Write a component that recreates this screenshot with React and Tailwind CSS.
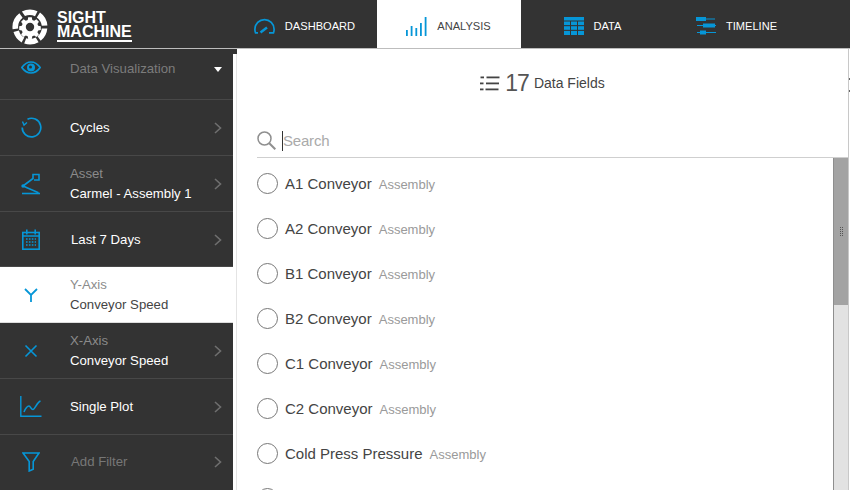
import React from 'react';

const BLUE = '#0696d7';

const Chevron = () => (
	<svg width="8" height="12" viewBox="0 0 8 12" fill="none" stroke="#6f6f6f" strokeWidth="1.6" className="shrink-0">
		<path d="M1 1l5.5 5L1 11" />
	</svg>
);

const LogoMark = () => (
	<svg width="36" height="36" viewBox="0 0 36 36" fill="#fff">
		<path d="M18 0.5a17.5 17.5 0 0 1 7.5 1.7L23 7.2A12 12 0 0 0 13 6.9L9.9 2.5A17.5 17.5 0 0 1 18 0.5z" />
		<path d="M28 3.6a17.5 17.5 0 0 1 7.4 13l-5.6 .2a12 12 0 0 0-5-8.4z" />
		<path d="M35.3 19.5a17.5 17.5 0 0 1-6.6 12.3l-3.2-4.6a12 12 0 0 0 4.3-7.8z" />
		<path d="M26.6 33.2a17.5 17.5 0 0 1-14.4 1.3l2-5.2a12 12 0 0 0 9.5-.8z" />
		<path d="M9.6 33.4A17.5 17.5 0 0 1 1.5 23l5.4-1.6a12 12 0 0 0 5.4 7.2z" />
		<path d="M.6 20.2A17.5 17.5 0 0 1 7.4 4.2l3.2 4.6A12 12 0 0 0 6.2 19.6z" />
		<path fillRule="evenodd" d="M16.2 9.5h3.6l.5 2.6 1.9.8 2.2-1.5 2.5 2.5-1.5 2.2.8 1.9 2.6.5v3.6l-2.6.5-.8 1.9 1.5 2.2-2.5 2.5-2.2-1.5-1.9.8-.5 2.6h-3.6l-.5-2.6-1.9-.8-2.2 1.5-2.5-2.5 1.5-2.2-.8-1.9-2.6-.5v-3.6l2.6-.5.8-1.9-1.5-2.2 2.5-2.5 2.2 1.5 1.9-.8zM18 15a4.2 4.2 0 1 0 0 8.4A4.2 4.2 0 0 0 18 15z" transform="translate(0 -1.2)" />
	</svg>
);

const GaugeIcon = () => (
	<svg width="21" height="16" viewBox="0 0 21 16" fill="none" stroke={BLUE} strokeWidth="1.7">
		<path d="M4 14.800H1.500A9.800 9.800 0 0 1 .9 11.200a9.600 9.600 0 0 1 19.200 0 9.800 9.800 0 0 1-.6 3.600H15" />
		<path d="M6.500 14.500l6.500-5" strokeWidth="2.400" />
	</svg>
);

const BarsIcon = () => (
	<svg width="21" height="19" viewBox="0 0 21 19" fill={BLUE}>
		<rect x="0" y="13" width="1.800" height="6" />
		<rect x="4.700" y="9" width="1.800" height="10" />
		<rect x="9.400" y="11" width="1.800" height="8" />
		<rect x="14" y="6" width="1.800" height="13" />
		<rect x="18.700" y="0" width="1.800" height="19" />
	</svg>
);

const TableIcon = () => (
	<svg width="20" height="18" viewBox="0 0 20 18" fill={BLUE}>
		<rect x="0" y="0" width="20" height="3.500" />
		<rect x="0" y="4.500" width="6" height="3.600" />
		<rect x="7" y="4.500" width="6" height="3.600" />
		<rect x="14" y="4.500" width="6" height="3.600" />
		<rect x="0" y="9.200" width="6" height="3.600" />
		<rect x="7" y="9.200" width="6" height="3.600" />
		<rect x="14" y="9.200" width="6" height="3.600" />
		<rect x="0" y="13.900" width="6" height="4.100" />
		<rect x="7" y="13.900" width="6" height="4.100" />
		<rect x="14" y="13.900" width="6" height="4.100" />
	</svg>
);

const TimelineIcon = () => (
	<svg width="20" height="18" viewBox="0 0 20 18" fill={BLUE}>
		<rect x="0" y="0" width="10" height="4" />
		<rect x="10" y="1.500" width="9" height="1" />
		<rect x="1" y="8" width="19" height="1" />
		<rect x="7" y="6.500" width="12" height="4" />
		<rect x="1" y="15" width="19" height="1" />
		<rect x="4" y="13.500" width="6" height="4" />
	</svg>
);

const EyeIcon = () => (
	<svg width="20" height="13" viewBox="0 0 20 13" fill="none" stroke={BLUE} strokeWidth="1.700">
		<path d="M.8 6.500C3.500 2.800 6.500 1 10 1s6.500 1.800 9.200 5.500C16.500 10.200 13.500 12 10 12S3.500 10.200.8 6.500z" />
		<circle cx="10" cy="6.500" r="4" fill={BLUE} stroke="none" />
		<circle cx="9.500" cy="6" r="1.500" fill="#333" stroke="none" />
	</svg>
);

const CyclesIcon = () => (
	<svg width="21" height="21" viewBox="0 0 21 21" fill="none" stroke={BLUE} strokeWidth="1.700">
		<path d="M6.500 2.200A9.300 9.300 0 1 1 1.200 10.500" />
		<path d="M1.500 4.500l1.500 3.500 3-2.500" strokeWidth="1.400" />
	</svg>
);

const AssetIcon = () => (
	<svg width="20" height="22" viewBox="0 0 20 22" fill="none" stroke={BLUE} strokeWidth="1.600">
		<path d="M2 13L12 5.500V1.500h6V7h-5" />
		<path d="M2 13l15.500 6.800" />
		<path d="M1 20.500h18" />
		<circle cx="2" cy="13" r="1.700" fill={BLUE} stroke="none" />
	</svg>
);

const CalendarIcon = () => (
	<svg width="18" height="21" viewBox="0 0 18 21" fill="none" stroke={BLUE} strokeWidth="1.600">
		<rect x=".8" y="3.500" width="16.400" height="16.700" />
		<path d="M.8 7h16.400M4.800 .5v5M13.200 .5v5" />
		<path d="M4 10h10M4 13h10M4 16h10" strokeWidth="1.600" strokeDasharray="1.600 1.300" />
	</svg>
);

const YIcon = () => (
	<svg width="14" height="14" viewBox="0 0 14 14" fill="none" stroke={BLUE} strokeWidth="1.800">
		<path d="M1 1l6 6 6-6M7 7v7" />
	</svg>
);

const XIcon = () => (
	<svg width="14" height="14" viewBox="0 0 14 14" fill="none" stroke={BLUE} strokeWidth="1.600">
		<path d="M1.500 1.500l11 11M12.500 1.500l-11 11" />
	</svg>
);

const PlotIcon = () => (
	<svg width="22" height="21" viewBox="0 0 22 21" fill="none" stroke={BLUE} strokeWidth="1.400">
		<path d="M.8 0v20.200H21.500" />
		<path d="M4 16c2-5 3.500-6 5-6s2 3.500 4 3.500S17 6 20.500 5" strokeWidth="1.600" />
	</svg>
);

const FunnelIcon = () => (
	<svg width="18" height="20" viewBox="0 0 18 20" fill="none" stroke={BLUE} strokeWidth="1.600">
		<path d="M1 1h16l-5.800 8.500v7.800l-4 1.700V9.500z" />
	</svg>
);

const ListIcon = () => (
	<svg width="20" height="15" viewBox="0 0 20 15" fill="#444">
		<rect x="0.500" y="0.500" width="3.500" height="1.800" />
		<rect x="6.500" y="0.500" width="13" height="1.800" />
		<rect x="0" y="6.500" width="3.500" height="1.800" />
		<rect x="6" y="6.500" width="13" height="1.800" />
		<rect x="0" y="12.500" width="3.500" height="1.800" />
		<rect x="5.500" y="12.500" width="13" height="1.800" />
	</svg>
);

const SearchIcon = () => (
	<svg width="19" height="19" viewBox="0 0 19 19" fill="none" stroke="#8f8f8f" strokeWidth="1.500">
		<circle cx="7.500" cy="7.500" r="6.500" />
		<path d="M12.300 12.300l6 6" strokeWidth="2" />
	</svg>
);

const navTabs = [
	{ label: 'DASHBOARD', icon: <GaugeIcon /> },
	{ label: 'ANALYSIS', icon: <BarsIcon />, active: true },
	{ label: 'DATA', icon: <TableIcon /> },
	{ label: 'TIMELINE', icon: <TimelineIcon /> },
];

const sideItems = [
	{ icon: <CyclesIcon />, title: 'Cycles', h: 'h-[56px]' },
	{ icon: <AssetIcon />, label: 'Asset', title: 'Carmel - Assembly 1', h: 'h-[56px]' },
	{ icon: <CalendarIcon />, title: 'Last 7 Days', h: 'h-[55px]', pad: 'pt-[1px]', pl: 'pl-[9px]' },
	{ icon: <YIcon />, label: 'Y-Axis', title: 'Conveyor Speed', h: 'h-[56px]', active: true },
	{ icon: <XIcon />, label: 'X-Axis', title: 'Conveyor Speed', h: 'h-[56px]' },
	{ icon: <PlotIcon />, title: 'Single Plot', h: 'h-[56px]' },
	{ icon: <FunnelIcon />, title: 'Add Filter', h: 'h-[56px]', pad: 'pb-[2px]', pl: 'pl-[9px]', muted: true },
];

const fields = [
	'A1 Conveyor',
	'A2 Conveyor',
	'B1 Conveyor',
	'B2 Conveyor',
	'C1 Conveyor',
	'C2 Conveyor',
	'Cold Press Pressure',
];

const Radio = () => <span className="h-[21px] w-[21px] shrink-0 rounded-full border border-[#777777]" />;

const SideRow = ({ item }) => (
	<div
		className={`flex ${item.h} ${item.pad || ''} shrink-0 items-center border-b pr-[11px] ${
			item.active ? 'border-[#dddddd] bg-white' : 'border-[#484848] bg-[#333333]'
		}`}
	>
		<div className="flex w-[62px] shrink-0 justify-center">{item.icon}</div>
		<div className={`min-w-0 flex-1 ${item.pl || 'pl-[8px]'} text-[13.2px] leading-[20px]`}>
			{item.label ? <div className="text-[#8b8b8b]">{item.label}</div> : null}
			<div className={item.muted ? 'text-[#777777]' : item.active ? 'text-[#444444]' : 'text-white'}>{item.title}</div>
		</div>
		{item.active ? null : <Chevron />}
	</div>
);

const App = () => (
	<div className="flex h-[490px] w-[850px] flex-col overflow-hidden bg-white font-['Liberation_Sans',Arial,sans-serif]">
		<header className="flex h-[49px] shrink-0 border-b border-[#bdbdbd] bg-[#333333]">
			<div className="flex w-[233px] shrink-0 items-center gap-[9px] pl-[12px] pt-[5px]">
				<LogoMark />
				<div className="border-b-2 border-white pb-[1px] text-[16px] font-bold leading-[14px] text-white">
					SIGHT<br />MACHINE
				</div>
			</div>
			{navTabs.map((tab) => (
				<div
					key={tab.label}
					className={`flex w-[144px] items-center justify-center gap-[10px] pt-[4px] pr-[1px] text-[11.1px] ${
						tab.active ? 'bg-white text-[#444444]' : 'text-white'
					}`}
				>
					{tab.icon}
					<span>{tab.label}</span>
				</div>
			))}
		</header>

		<div className="flex min-h-0 flex-1">
			<aside className="flex w-[233px] shrink-0 flex-col overflow-hidden bg-[#333333]">
				<div className="flex h-[51px] shrink-0 border-b border-[#484848] pr-[11px] pt-[12px]">
					<div className="flex h-[16px] w-[62px] shrink-0 justify-center"><EyeIcon /></div>
					<div className="flex-1 pl-[8px] text-[13.2px] leading-[16px] text-[#7c7c7c]">Data Visualization</div>
					<div className="mt-[6px] h-0 w-0 border-x-[4px] border-t-[5px] border-x-transparent border-t-white" />
				</div>
				{sideItems.map((item) => <SideRow key={`${item.title}-${item.label}`} item={item} />)}
			</aside>

			<div className="flex w-[4px] shrink-0 flex-col">
				<div className="h-[5px] bg-[#333333]" />
				<div className="ml-[3px] w-[1px] flex-1 bg-[#e4e4e4]" />
			</div>

			<section className="flex w-[612px] shrink-0 flex-col border-r border-[#c8c8c8] bg-white">
				<div className="flex h-[109px] shrink-0 flex-col">
					<div className="flex h-[68px] shrink-0 items-center justify-center gap-[5px] text-[#444444]">
						<ListIcon />
						<span className="text-[23px] tracking-[-1px] text-[#555555]">17</span>
						<span className="text-[14px]">Data Fields</span>
					</div>
					<div className="ml-[20px] flex h-[41px] items-start gap-[6px] border-b border-[#cfcfcf] pt-[14px] text-[#aaaaaa]">
						<SearchIcon />
						<span className="border-l border-[#333333] text-[15px] leading-[20px] tracking-[-0.2px]">Search</span>
					</div>
				</div>
				<div className="flex min-h-0 flex-1 overflow-hidden">
					<ul className="min-w-0 flex-1 pl-[20px] pt-[3px]">
						{fields.map((name) => (
							<li key={name} className="flex h-[45px] items-center">
								<Radio />
								<span className="ml-[7px] mt-[2px] text-[15px] text-[#444444]">{name}</span>
								<span className="ml-[7px] mt-[2px] text-[13px] text-[#9a9a9a]">Assembly</span>
							</li>
						))}
						<li className="flex h-[45px] items-center"><Radio /></li>
					</ul>
					<div className="flex w-[15px] shrink-0 flex-col border-l border-[#8e8e8e] bg-[#e2e2e2]">
						<div className="flex h-[147px] items-end justify-center bg-[#a3a3a3] pb-[69px]">
							<div className="grid grid-cols-2 gap-[1px]">
								{Array.from({ length: 10 }).map((_, i) => (
									<span key={i} className="h-[1px] w-[1px] bg-[#555555]" />
								))}
							</div>
						</div>
					</div>
				</div>
			</section>

			<div className="flex w-[1px] shrink-0 flex-col gap-[10px] pt-[29px]">
				<span className="h-[2px] bg-[#666666]" />
				<span className="h-[2px] bg-[#666666]" />
			</div>
		</div>
	</div>
);

export default App;
